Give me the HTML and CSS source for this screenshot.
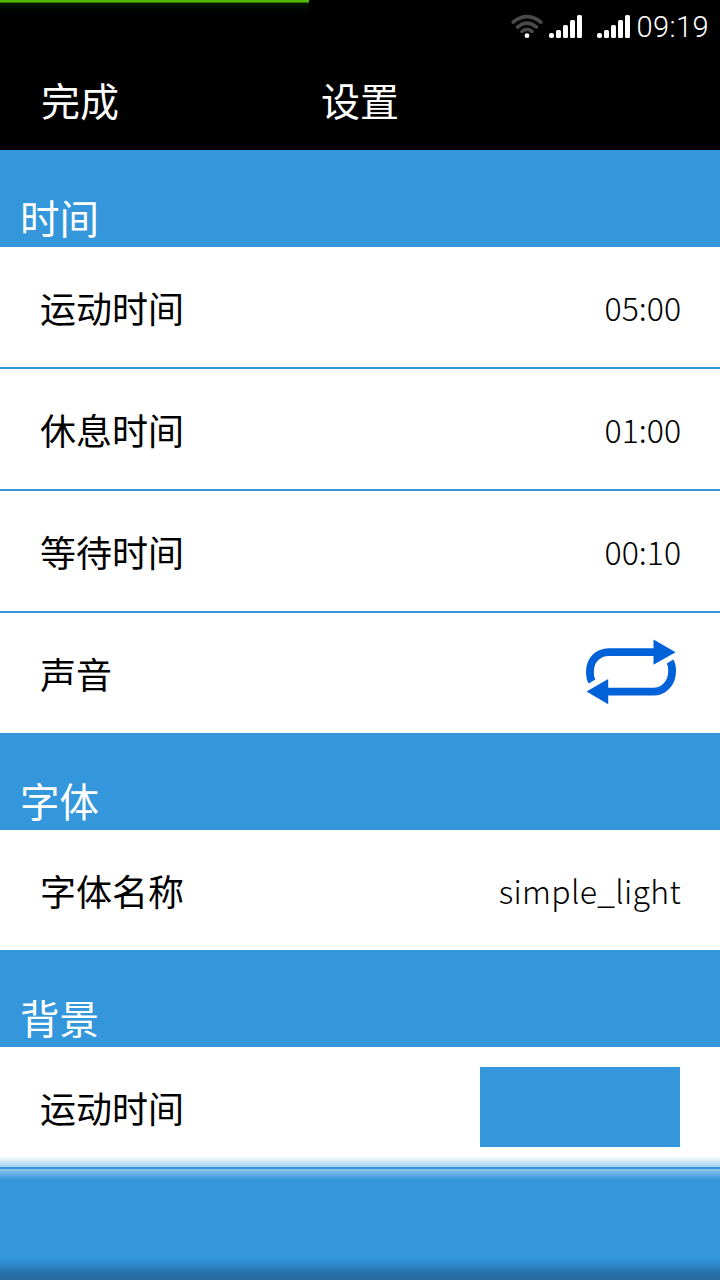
FILE: index.html
```html
<!DOCTYPE html>
<html lang="zh-CN">
<head>
    <meta charset="UTF-8">
    <meta name="viewport" content="width=device-width, initial-scale=1.0">
    <title>设置</title>
    <link rel="stylesheet" href="styles.css">
</head>
<body>
    <div class="screen">
        <div class="progress"></div>
        <div class="status-bar">
            <svg class="wifi" width="34" height="28" viewBox="0 0 34 28">
                <g fill="none" stroke="#4a4a4a" stroke-width="3.6" stroke-linecap="round">
                    <path d="M3.2 9.2 Q17 -1.8 30.8 9.2"/>
                    <path d="M7.6 14 Q17 6.4 26.4 14"/>
                    <path d="M12 18.4 Q17 14.6 22 18.4"/>
                </g>
                <circle cx="17" cy="22.7" r="2.4" fill="#fff"/>
            </svg>
            <svg class="signal" width="34" height="24" viewBox="0 0 34 24">
                <rect x="0" y="18" width="5" height="5" rx="2"/>
                <rect x="7" y="15" width="5" height="8" rx="1.5"/>
                <rect x="14" y="10" width="5" height="13" rx="1.5"/>
                <rect x="21" y="5" width="5" height="18" rx="1.5"/>
                <rect x="28" y="0" width="5" height="23" rx="1.5"/>
            </svg>
            <svg class="signal" width="34" height="24" viewBox="0 0 34 24">
                <rect x="0" y="18" width="5" height="5" rx="2"/>
                <rect x="7" y="15" width="5" height="8" rx="1.5"/>
                <rect x="14" y="10" width="5" height="13" rx="1.5"/>
                <rect x="21" y="5" width="5" height="18" rx="1.5"/>
                <rect x="28" y="0" width="5" height="23" rx="1.5"/>
            </svg>
            <span class="clock">09:19</span>
        </div>

        <div class="nav-bar">
            <a class="done">完成</a>
            <h1>设置</h1>
        </div>

        <h2>时间</h2>
        <ul class="group">
            <li><span class="name">运动时间</span><span class="value">05:00</span></li>
            <li><span class="name">休息时间</span><span class="value">01:00</span></li>
            <li><span class="name">等待时间</span><span class="value">00:10</span></li>
            <li>
                <span class="name">声音</span>
                <svg class="repeat" width="100" height="80" viewBox="0 0 100 80">
                    <g fill="none" stroke="#0062d8" stroke-width="7.8">
                        <path d="M12 48.5 C10.4 46 9.9 43 9.9 39 C9.9 27 18 19.2 29 19.2 H75"/>
                        <path d="M90 28.5 C91.6 31 92.1 34 92.1 38 C92.1 50 84 58.7 73 58.7 H27"/>
                    </g>
                    <path fill="#0062d8" d="M73.5 6.5 L95.6 19.2 L73.5 31.8 Z M28.2 46 L6.5 58.6 L28.2 71.2 Z"/>
                </svg>
            </li>
        </ul>

        <h2>字体</h2>
        <ul class="group">
            <li><span class="name">字体名称</span><span class="value font-name">simple_light</span></li>
        </ul>

        <h2>背景</h2>
        <ul class="group">
            <li><span class="name">运动时间</span><span class="color-box"></span></li>
        </ul>

        <div class="footer"></div>
    </div>
</body>
</html>
```
FILE: styles.css
```css
* {
    margin: 0;
    padding: 0;
    box-sizing: border-box;
}
body {
    font-family: 'Noto Sans CJK SC', sans-serif;
    background-color: #3497db;
}
.screen {
    position: relative;
    display: flex;
    flex-direction: column;
    width: 720px;
    height: 1280px;
    overflow: hidden;
}
.progress {
    position: absolute;
    top: 0;
    left: 0;
    width: 309px;
    height: 12px;
    background: linear-gradient(#52bb06 0, #52bb06 2px, #2d7000 2px, #2d7000 3px, #081800 3px, #000 12px);
}
.status-bar {
    display: flex;
    height: 50px;
    padding: 15px 11px 0 0;
    justify-content: flex-end;
    background-color: #000;
}
.wifi {
    margin: -2px 5px 0 0;
}
.signal {
    margin-right: 14px;
    fill: #fff;
}
.clock {
    margin-left: -8px;
    color: #fff;
    font-family: Roboto, sans-serif;
    font-size: 29px;
    font-weight: 300;
    line-height: 24px;
    letter-spacing: 0.4px;
}
.nav-bar {
    display: grid;
    grid-template-columns: 1fr auto 1fr;
    height: 100px;
    padding: 0 40px 2px;
    align-items: center;
    background-color: #000;
    color: #fff;
    font-size: 39px;
}
.done {
    padding-left: 1px;
}
h1 {
    padding-bottom: 1px;
    font-size: 39px;
    font-weight: normal;
}
h2 {
    height: 97px;
    padding: 38px 20px 0;
    color: #fff;
    font-size: 39.5px;
    font-weight: normal;
    line-height: 57px;
}
.group {
    list-style: none;
}
.group li {
    display: flex;
    height: 120px;
    padding: 0 40px;
    justify-content: space-between;
    align-items: center;
    background-color: #fff;
    color: #000;
    font-size: 36px;
}
.group li + li {
    height: 122px;
    border-top: 2px solid #3497db;
}
.name {
    padding-bottom: 1px;
}
.value {
    margin-right: -1px;
    font-size: 32px;
    font-weight: 300;
}
.font-name {
    letter-spacing: 0.3px;
}
.color-box {
    width: 200px;
    height: 80px;
    background-color: #3497db;
}
/* fading edges of the scroll area */
.footer {
    position: relative;
    flex: 1;
    background: linear-gradient(#3497db 2px, #8ec5ec 2px, #3497db 13px, #3497db 92px, #2876b2 104px, #286da0 110px);
}
.footer::before {
    content: '';
    position: absolute;
    top: -11px;
    left: 0;
    width: 100%;
    height: 11px;
    background: linear-gradient(#fff, #a3d0ef);
}
```
